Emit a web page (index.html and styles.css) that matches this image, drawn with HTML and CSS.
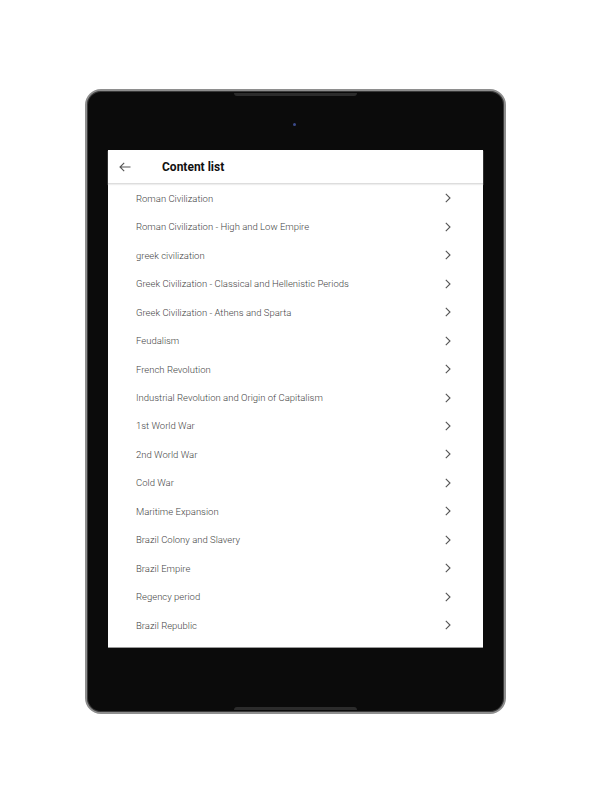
FILE: index.html
```html
<!DOCTYPE html>
<html lang="en">
<head>
    <meta charset="UTF-8">
    <meta name="viewport" content="width=device-width, initial-scale=1.0">
    <title>Content list</title>
    <link rel="stylesheet" href="styles.css">
</head>
<body>

    <!-- Tablet frame -->
    <div class="tablet">
        <div class="notch notch-top"></div>
        <div class="camera"></div>

        <!-- Screen -->
        <div class="screen">
            <div class="app-bar">
                <svg class="back" width="12" height="10" viewBox="0 0 12 10">
                    <path d="M11.5 5H1M5.2 0.8L1 5l4.2 4.2" fill="none" stroke="#555" stroke-width="1.1"/>
                </svg>
                <h1 class="title">Content list</h1>
            </div>

            <ul id="content-list" class="content-list"></ul>
        </div>

        <div class="notch notch-bottom"></div>
    </div>

    <script>
        const topics = [
            "Roman Civilization",
            "Roman Civilization - High and Low Empire",
            "greek civilization",
            "Greek Civilization - Classical and Hellenistic Periods",
            "Greek Civilization - Athens and Sparta",
            "Feudalism",
            "French Revolution",
            "Industrial Revolution and Origin of Capitalism",
            "1st World War",
            "2nd World War",
            "Cold War",
            "Maritime Expansion",
            "Brazil Colony and Slavery",
            "Brazil Empire",
            "Regency period",
            "Brazil Republic"
        ];

        // Build the list rows
        const list = document.getElementById("content-list");
        topics.forEach(topic => {
            const li = document.createElement("li");
            li.className = "item";
            li.innerHTML = '<span class="label"></span>' +
                '<svg class="chevron" width="6" height="10" viewBox="0 0 6 10">' +
                '<path d="M0.8 0.8L5 5L0.8 9.2" fill="none" stroke="#555" stroke-width="1.1"/></svg>';
            li.querySelector(".label").textContent = topic;
            list.appendChild(li);
        });
    </script>

</body>
</html>
```

FILE: styles.css
```css
body { margin: 0; background: #fff; font-family: Roboto, "Liberation Sans", sans-serif; }
.tablet { position: relative; box-sizing: border-box; width: 421px; height: 625px; margin: 89px 0 0 85px; padding: 59px 21px 0; background: #0b0b0b; border: 2px solid #8e8e8e; border-radius: 16px; box-shadow: inset 0 0 0 1px #3a3a3a; }
.notch { position: absolute; left: 147px; width: 123px; height: 3px; background: #2c2c2c; }
.notch-top { top: 2px; border-radius: 0 0 3px 3px; }
.notch-bottom { bottom: 2px; border-radius: 3px 3px 0 0; }
.camera { position: absolute; left: 206px; top: 32px; width: 3px; height: 3px; border-radius: 50%; background: #3b4a8a; }
.screen { box-sizing: border-box; width: 375px; height: 498px; background: #fff; border-bottom: 1px solid #9a9a9a; }
.app-bar { display: flex; align-items: center; height: 33px; border-bottom: 1px solid #ddd; box-shadow: 0 1px 1px #eee; }
.back { margin-left: 11px; }
.title { margin: 0 0 0 31px; font-size: 12px; font-weight: 700; color: #111; }
.content-list { list-style: none; margin: 0; padding: 0; }
.item { display: flex; align-items: center; justify-content: space-between; height: 28.47px; padding: 0 32px 0 28px; }
.label { font-size: 9.5px; font-weight: 300; color: #444; }
.chevron { display: block; }
```
